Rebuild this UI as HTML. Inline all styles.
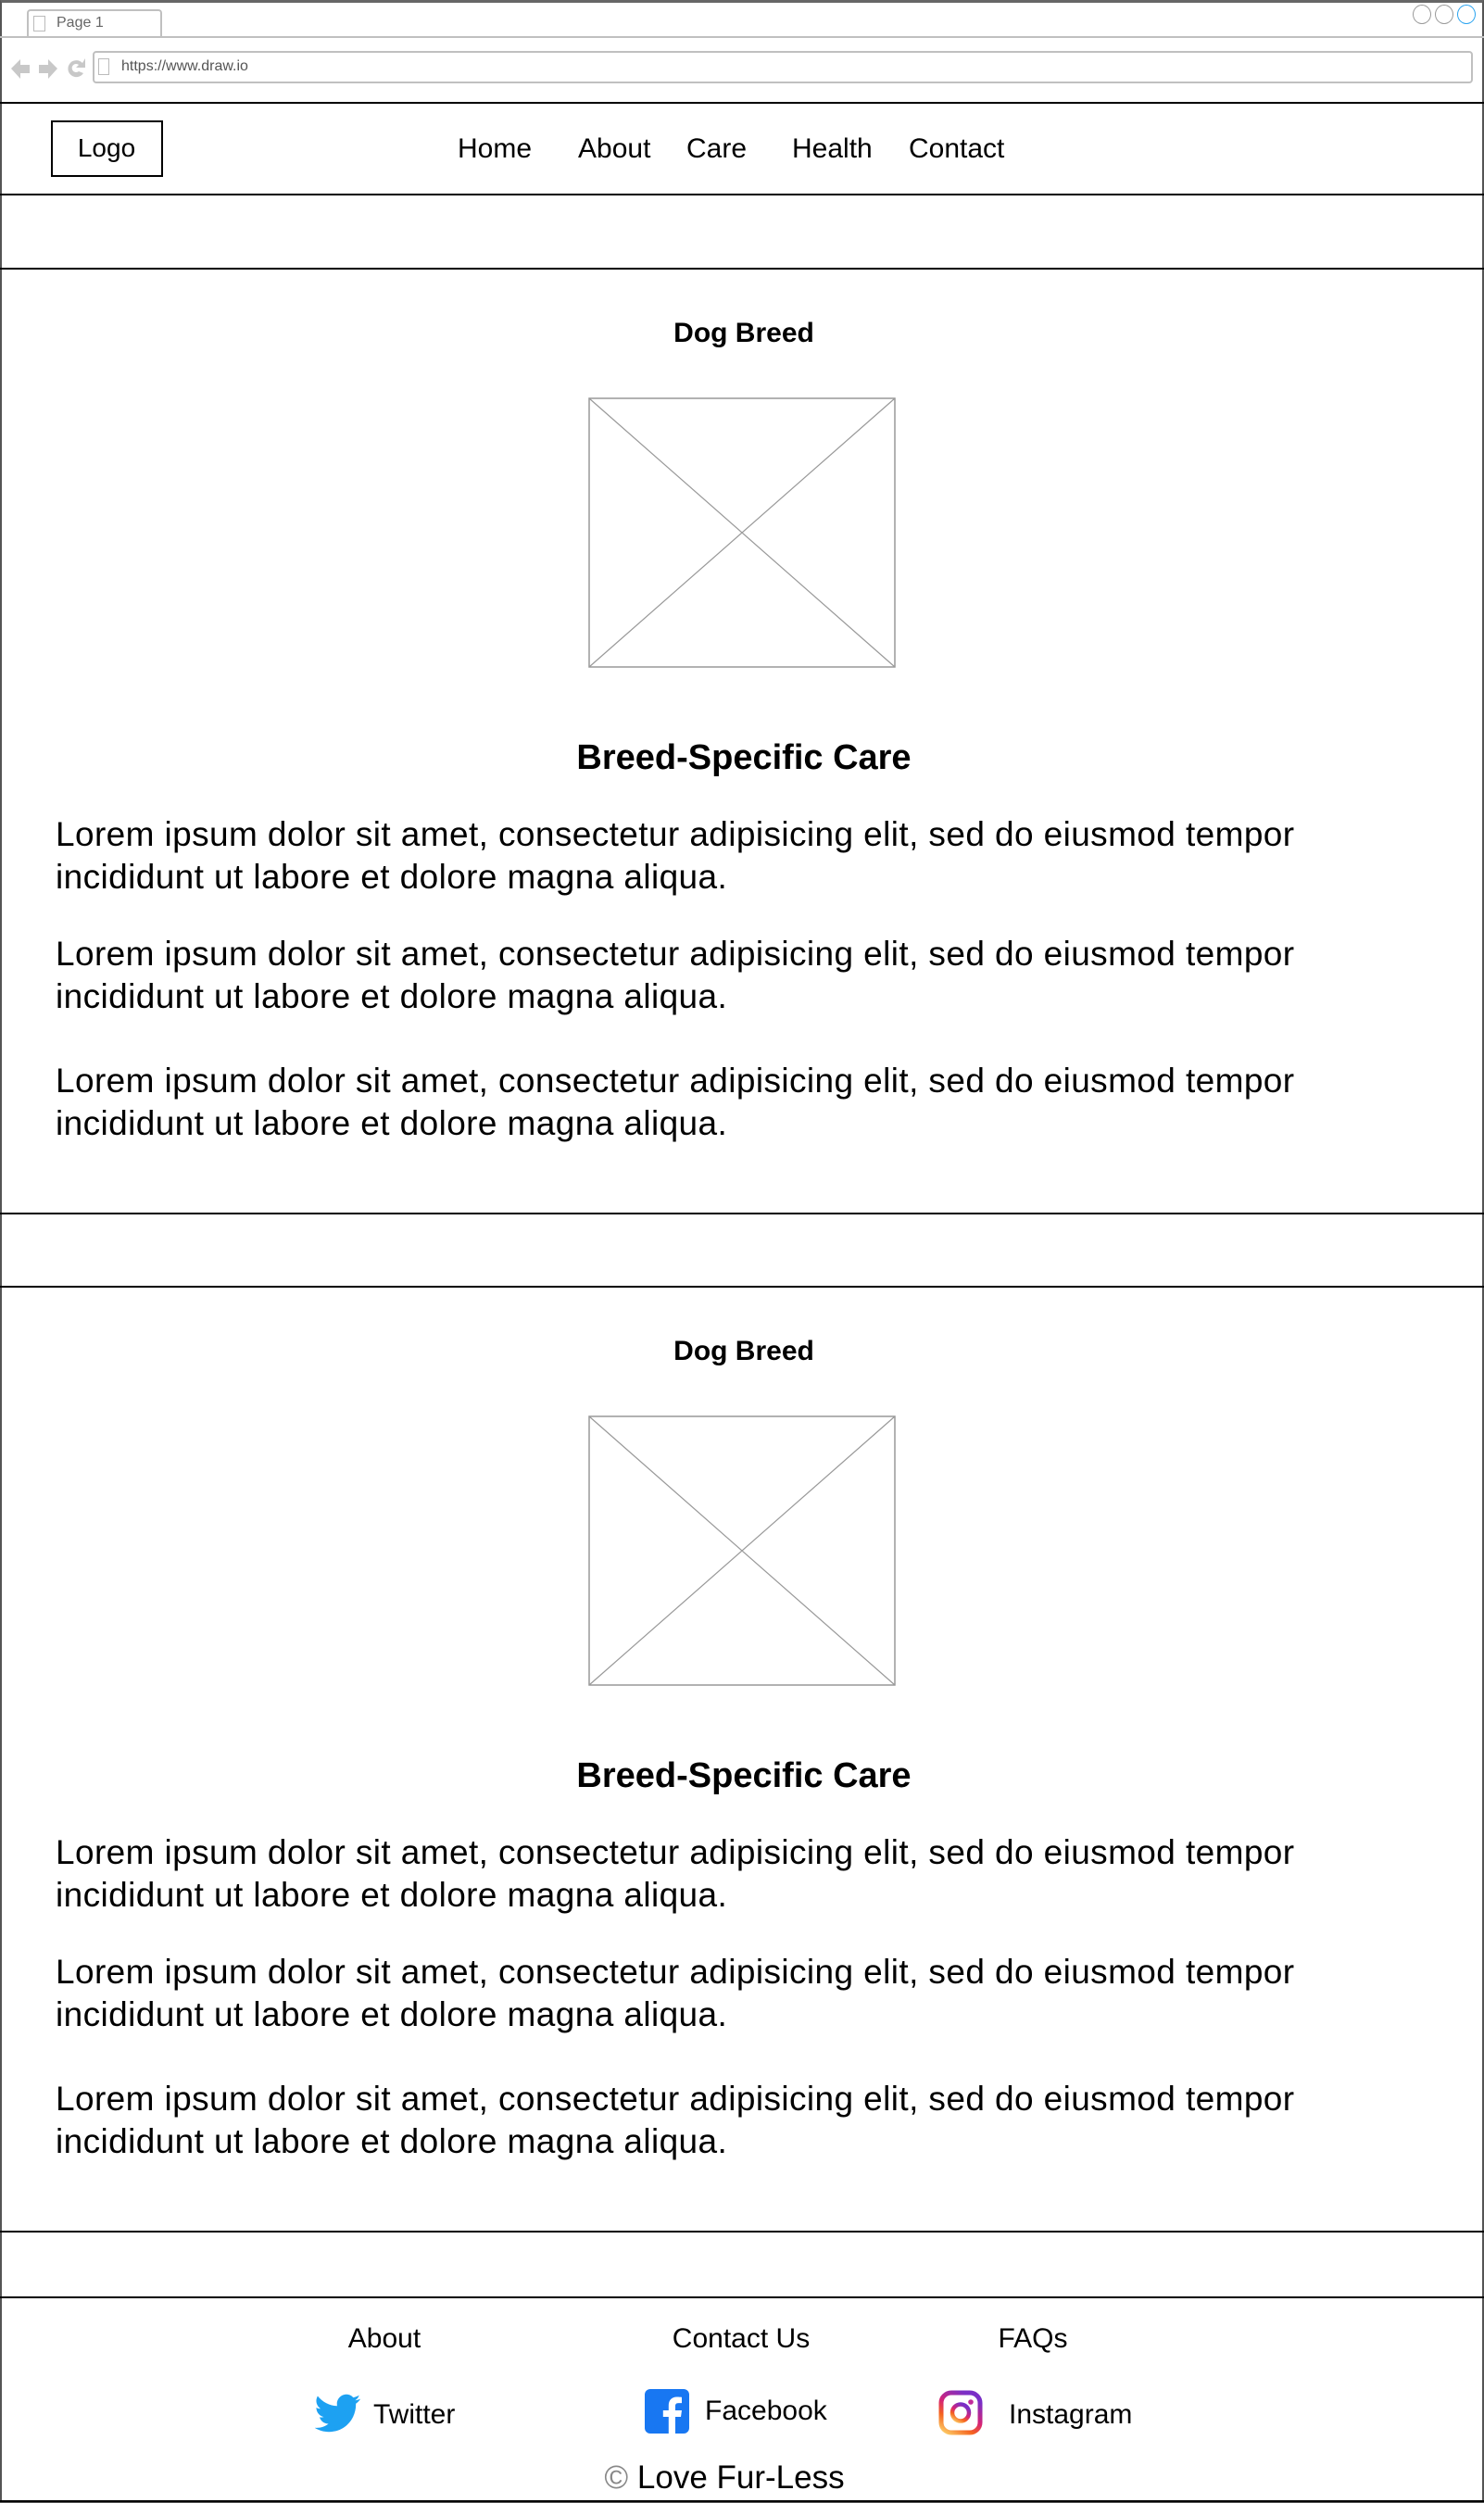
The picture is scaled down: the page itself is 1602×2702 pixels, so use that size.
<!DOCTYPE html>
<html><head><meta charset="utf-8"><style>
*{margin:0;padding:0;box-sizing:border-box}
body{width:1602px;height:2702px;position:relative;background:#fff;font-family:"Liberation Sans",Arial,sans-serif;color:#000;overflow:hidden}
.a{position:absolute;white-space:nowrap;line-height:1}
.hl{position:absolute;left:0;width:1602px;height:2px;background:#000}
.p{position:absolute;left:60px;font-size:37px;letter-spacing:0.4px;line-height:46px;white-space:nowrap}
.c{transform:translateX(-50%)}
</style></head><body>
<div style="position:absolute;left:0;top:0;width:1602px;height:2702px;border:2px solid #555;border-top:3px solid #666"></div>
<div style="position:absolute;left:29px;top:10px;width:146px;height:31px;border:2px solid #c0c0c0;border-bottom:none;border-radius:4px 4px 0 0;background:#fff"></div>
<div style="position:absolute;left:0;top:39px;width:1602px;height:2px;background:#c0c0c0"></div>
<div style="position:absolute;left:36px;top:17px;width:13px;height:17px;border:1.5px solid #bbb"></div>
<div class="a" style="left:61px;top:17px;font-size:16px;color:#666">Page 1</div>
<div style="position:absolute;left:1525px;top:5px;width:20px;height:21px;border:1.5px solid #999;border-radius:50%"></div>
<div style="position:absolute;left:1549px;top:5px;width:20px;height:21px;border:1.5px solid #999;border-radius:50%"></div>
<div style="position:absolute;left:1573px;top:5px;width:20px;height:21px;border:1.5px solid #29a3f0;border-radius:50%"></div>
<svg style="position:absolute;left:10px;top:60px" width="85" height="30" viewBox="0 0 85 30">
<path d="M2 14 L12 4 L12 10 L22 10 L22 19 L12 19 L12 25 Z" fill="#c8c8c8"/>
<path d="M52 14 L42 4 L42 10 L32 10 L32 19 L42 19 L42 25 Z" fill="#c8c8c8"/>
<path d="M79 8 A9 9 0 1 0 80 19 L75 17 A4.5 4.5 0 1 1 75 10 L72 13 L82 13 L82 3 Z" fill="#c8c8c8"/>
</svg>
<div style="position:absolute;left:100px;top:55px;width:1490px;height:35px;border:2px solid #c0c0c0;border-radius:4px"></div>
<div style="position:absolute;left:106px;top:63px;width:12px;height:18px;border:1.5px solid #bbb"></div>
<div class="a" style="left:131px;top:64px;font-size:16px;color:#555">https://www.draw.io</div>
<div class="hl" style="top:110px"></div>
<div class="hl" style="top:209px"></div>
<div style="position:absolute;left:55px;top:130px;width:121px;height:61px;border:2px solid #000"></div>
<div class="a c" style="left:115px;top:146px;font-size:28px">Logo</div>
<div class="a" style="left:494px;top:146px;font-size:30px">Home</div>
<div class="a" style="left:624px;top:146px;font-size:30px">About</div>
<div class="a" style="left:741px;top:146px;font-size:30px">Care</div>
<div class="a" style="left:855px;top:146px;font-size:30px">Health</div>
<div class="a" style="left:981px;top:146px;font-size:30px">Contact</div>
<div class="hl" style="top:289px"></div>
<div class="hl" style="top:1309px"></div>
<div class="hl" style="top:1388px"></div>
<div class="hl" style="top:2408px"></div>
<div class="hl" style="top:2479px"></div>
<div class="hl" style="top:2699px"></div>

<div class="a c" style="left:803px;top:345px;font-size:30px;font-weight:bold">Dog Breed</div>
<svg style="position:absolute;left:635px;top:429px" width="332" height="292"><rect x="1" y="1" width="330" height="290" fill="#fff" stroke="#999" stroke-width="1.5"/><path d="M1 1 L331 291 M331 1 L1 291" stroke="#999" stroke-width="1.2"/></svg>
<div class="a c" style="left:803px;top:799px;font-size:38px;font-weight:bold">Breed-Specific Care</div>
<div class="p" style="top:878px">Lorem ipsum dolor sit amet, consectetur adipisicing elit, sed do eiusmod tempor<br>incididunt ut labore et dolore magna aliqua.</div>
<div class="p" style="top:1007px">Lorem ipsum dolor sit amet, consectetur adipisicing elit, sed do eiusmod tempor<br>incididunt ut labore et dolore magna aliqua.</div>
<div class="p" style="top:1144px">Lorem ipsum dolor sit amet, consectetur adipisicing elit, sed do eiusmod tempor<br>incididunt ut labore et dolore magna aliqua.</div>

<div class="a c" style="left:803px;top:1444px;font-size:30px;font-weight:bold">Dog Breed</div>
<svg style="position:absolute;left:635px;top:1528px" width="332" height="292"><rect x="1" y="1" width="330" height="290" fill="#fff" stroke="#999" stroke-width="1.5"/><path d="M1 1 L331 291 M331 1 L1 291" stroke="#999" stroke-width="1.2"/></svg>
<div class="a c" style="left:803px;top:1898px;font-size:38px;font-weight:bold">Breed-Specific Care</div>
<div class="p" style="top:1977px">Lorem ipsum dolor sit amet, consectetur adipisicing elit, sed do eiusmod tempor<br>incididunt ut labore et dolore magna aliqua.</div>
<div class="p" style="top:2106px">Lorem ipsum dolor sit amet, consectetur adipisicing elit, sed do eiusmod tempor<br>incididunt ut labore et dolore magna aliqua.</div>
<div class="p" style="top:2243px">Lorem ipsum dolor sit amet, consectetur adipisicing elit, sed do eiusmod tempor<br>incididunt ut labore et dolore magna aliqua.</div>

<div class="a c" style="left:415px;top:2510px;font-size:30px">About</div>
<div class="a c" style="left:800px;top:2510px;font-size:30px">Contact Us</div>
<div class="a c" style="left:1115px;top:2510px;font-size:30px">FAQs</div>

<svg style="position:absolute;left:340px;top:2580px" width="50" height="50" viewBox="0 0 24 24"><path fill="#1da1f2" d="M23.6 4.6c-.9.4-1.8.6-2.8.8 1-.6 1.8-1.6 2.1-2.7-.9.6-2 1-3.1 1.2C19 2.9 17.7 2.3 16.3 2.3c-2.7 0-4.9 2.2-4.900 4.9 0 .4 0 .8.1 1.1C7.4 8.1 3.8 6.1 1.4 3.1 1 3.9.7 4.7.7 5.6c0 1.7.9 3.2 2.2 4.1-.8 0-1.6-.2-2.2-.6v.1c0 2.4 1.7 4.4 3.9 4.8-.4.1-.8.2-1.3.2-.3 0-.6 0-.9-.1.6 2 2.4 3.4 4.6 3.4-1.7 1.3-3.8 2.1-6.1 2.1-.4 0-.8 0-1.2-.1 2.2 1.4 4.8 2.2 7.5 2.2 9.1 0 14-7.5 14-14v-.6c1-.7 1.8-1.600 2.4-2.5z"/></svg>
<div class="a" style="left:403px;top:2592px;font-size:30px">Twitter</div>

<svg style="position:absolute;left:696px;top:2579px" width="48" height="48" viewBox="0 0 48 48"><rect x="0" y="0" width="48" height="48" rx="6" fill="#1877f2"/><path fill="#fff" d="M33 48V30h6l1-7h-7v-4.5c0-2 .6-3.4 3.5-3.4H40V8.8c-.6-.1-2.8-.3-5.3-.3-5.3 0-8.9 3.2-8.9 9.1V23h-6v7h6v18z"/></svg>
<div class="a" style="left:761px;top:2588px;font-size:30px">Facebook</div>

<svg style="position:absolute;left:1013px;top:2580px" width="48" height="49" viewBox="0 0 48 49"><defs><linearGradient id="ig" x1="0" y1="1" x2="0.6" y2="0"><stop offset="0" stop-color="#fdd46c"/><stop offset="0.35" stop-color="#f5621e"/><stop offset="0.6" stop-color="#d62476"/><stop offset="1" stop-color="#7a2fc6"/></linearGradient></defs><rect x="3" y="3" width="42" height="43" rx="11" fill="none" stroke="url(#ig)" stroke-width="5"/><circle cx="24" cy="24.5" r="9" fill="none" stroke="url(#ig)" stroke-width="4.5"/><circle cx="35" cy="13" r="2.8" fill="#c22a9a"/></svg>
<div class="a" style="left:1089px;top:2592px;font-size:30px">Instagram</div>

<div class="a c" style="left:782px;top:2657px;font-size:35px"><span style="color:#888">©</span> Love Fur-Less</div>
</body></html>
